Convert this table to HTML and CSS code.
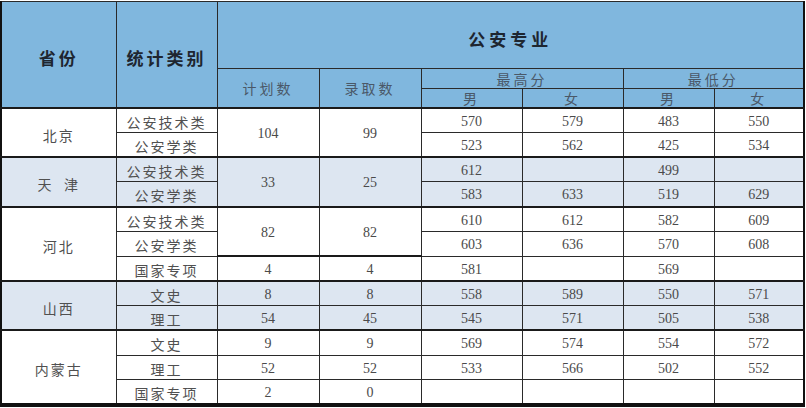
FILE: index.html
```html
<!DOCTYPE html>
<html lang="zh">
<head>
<meta charset="utf-8">
<title>公安专业录取分数</title>
<link rel="stylesheet" href="styles.css">
</head>
<body>
<table class="scores">
  <colgroup>
    <col class="c-prov"><col class="c-cat"><col class="c-plan"><col class="c-adm">
    <col class="c-hm"><col class="c-hf"><col class="c-lm"><col class="c-lf">
  </colgroup>
  <thead>
    <tr class="h1">
      <th rowspan="3" class="big">省份</th>
      <th rowspan="3" class="big">统计类别</th>
      <th colspan="6" class="title">公安专业</th>
    </tr>
    <tr class="h2">
      <th rowspan="2" class="sub">计划数</th>
      <th rowspan="2" class="sub">录取数</th>
      <th colspan="2" class="sub">最高分</th>
      <th colspan="2" class="sub">最低分</th>
    </tr>
    <tr class="h3">
      <th class="sub">男</th><th class="sub">女</th><th class="sub">男</th><th class="sub">女</th>
    </tr>
  </thead>
  <tbody class="grp">
    <tr><td rowspan="2" class="prov">北京</td><td class="cat">公安技术类</td><td rowspan="2">104</td><td rowspan="2">99</td><td>570</td><td>579</td><td>483</td><td>550</td></tr>
    <tr><td class="cat">公安学类</td><td>523</td><td>562</td><td>425</td><td>534</td></tr>
  </tbody>
  <tbody class="grp shade">
    <tr><td rowspan="2" class="prov">天&nbsp;&nbsp;津</td><td class="cat">公安技术类</td><td rowspan="2">33</td><td rowspan="2">25</td><td>612</td><td></td><td>499</td><td></td></tr>
    <tr><td class="cat">公安学类</td><td>583</td><td>633</td><td>519</td><td>629</td></tr>
  </tbody>
  <tbody class="grp">
    <tr><td rowspan="3" class="prov">河北</td><td class="cat">公安技术类</td><td rowspan="2">82</td><td rowspan="2">82</td><td>610</td><td>612</td><td>582</td><td>609</td></tr>
    <tr><td class="cat">公安学类</td><td>603</td><td>636</td><td>570</td><td>608</td></tr>
    <tr><td class="cat">国家专项</td><td>4</td><td>4</td><td>581</td><td></td><td>569</td><td></td></tr>
  </tbody>
  <tbody class="grp shade">
    <tr><td rowspan="2" class="prov">山西</td><td class="cat">文史</td><td>8</td><td>8</td><td>558</td><td>589</td><td>550</td><td>571</td></tr>
    <tr><td class="cat">理工</td><td>54</td><td>45</td><td>545</td><td>571</td><td>505</td><td>538</td></tr>
  </tbody>
  <tbody class="grp">
    <tr><td rowspan="3" class="prov">内蒙古</td><td class="cat">文史</td><td>9</td><td>9</td><td>569</td><td>574</td><td>554</td><td>572</td></tr>
    <tr><td class="cat">理工</td><td>52</td><td>52</td><td>533</td><td>566</td><td>502</td><td>552</td></tr>
    <tr><td class="cat">国家专项</td><td>2</td><td>0</td><td></td><td></td><td></td><td></td></tr>
  </tbody>
</table>
</body>
</html>
```

FILE: styles.css
```css
html, body {
  margin: 0;
  padding: 0;
  background: #ffffff;
}

.scores {
  border-collapse: collapse;
  table-layout: fixed;
  width: 805px;
  margin-top: 1px;
  border: 2px solid #111;
  border-bottom-width: 4px;
  border-top: 1px solid #556;
  font-family: "Liberation Serif", "Noto Sans CJK SC", serif;
  font-size: 14px;
  color: #4a4a4a;
}

.c-prov { width: 115px; }
.c-cat  { width: 101px; }
.c-plan { width: 102px; }
.c-adm  { width: 102px; }
.c-hm   { width: 101px; }
.c-hf   { width: 101px; }
.c-lm   { width: 91px; }
.c-lf   { width: 90px; }

.scores th,
.scores td {
  border: 1px solid #2a2a2a;
  padding: 0;
  text-align: center;
  vertical-align: middle;
  line-height: 16px;
}

.scores td {
  padding-top: 3px;
}

.scores thead th {
  background: #80b7de;
  color: #1e2630;
}

.scores thead tr:last-child th,
.scores thead th[rowspan="3"],
.scores thead th[rowspan="2"] {
  border-bottom: 2px solid #1a1a1a;
}

.h1 { height: 67px; }
.h2 { height: 20px; }
.h3 { height: 19px; }

.big {
  font-family: "Noto Sans CJK SC", sans-serif;
  font-weight: 700;
  font-size: 17px;
  letter-spacing: 3px;
  padding-top: 8px !important;
}

.title {
  font-family: "Noto Sans CJK SC", sans-serif;
  font-weight: 700;
  font-size: 17px;
  letter-spacing: 4px;
  padding-top: 8px !important;
}

.sub {
  font-family: "Noto Sans CJK SC", sans-serif;
  font-weight: 400 !important;
  font-size: 14px;
  letter-spacing: 3px;
  color: #4a5868 !important;
}

.scores tbody tr { height: 24.75px; }

.grp { border-top: 2px solid #1a1a1a; }
.grp td[rowspan] { border-bottom: 2px solid #1a1a1a; }
.grp tr:last-child td { border-bottom: 2px solid #1a1a1a; }

.shade td { background: #dde6f1; }

.prov,
.cat {
  font-family: "Noto Sans CJK SC", sans-serif;
  font-size: 14px;
  letter-spacing: 2px;
  color: #505050;
}

.prov {
  padding-top: 5px !important;
}
```
